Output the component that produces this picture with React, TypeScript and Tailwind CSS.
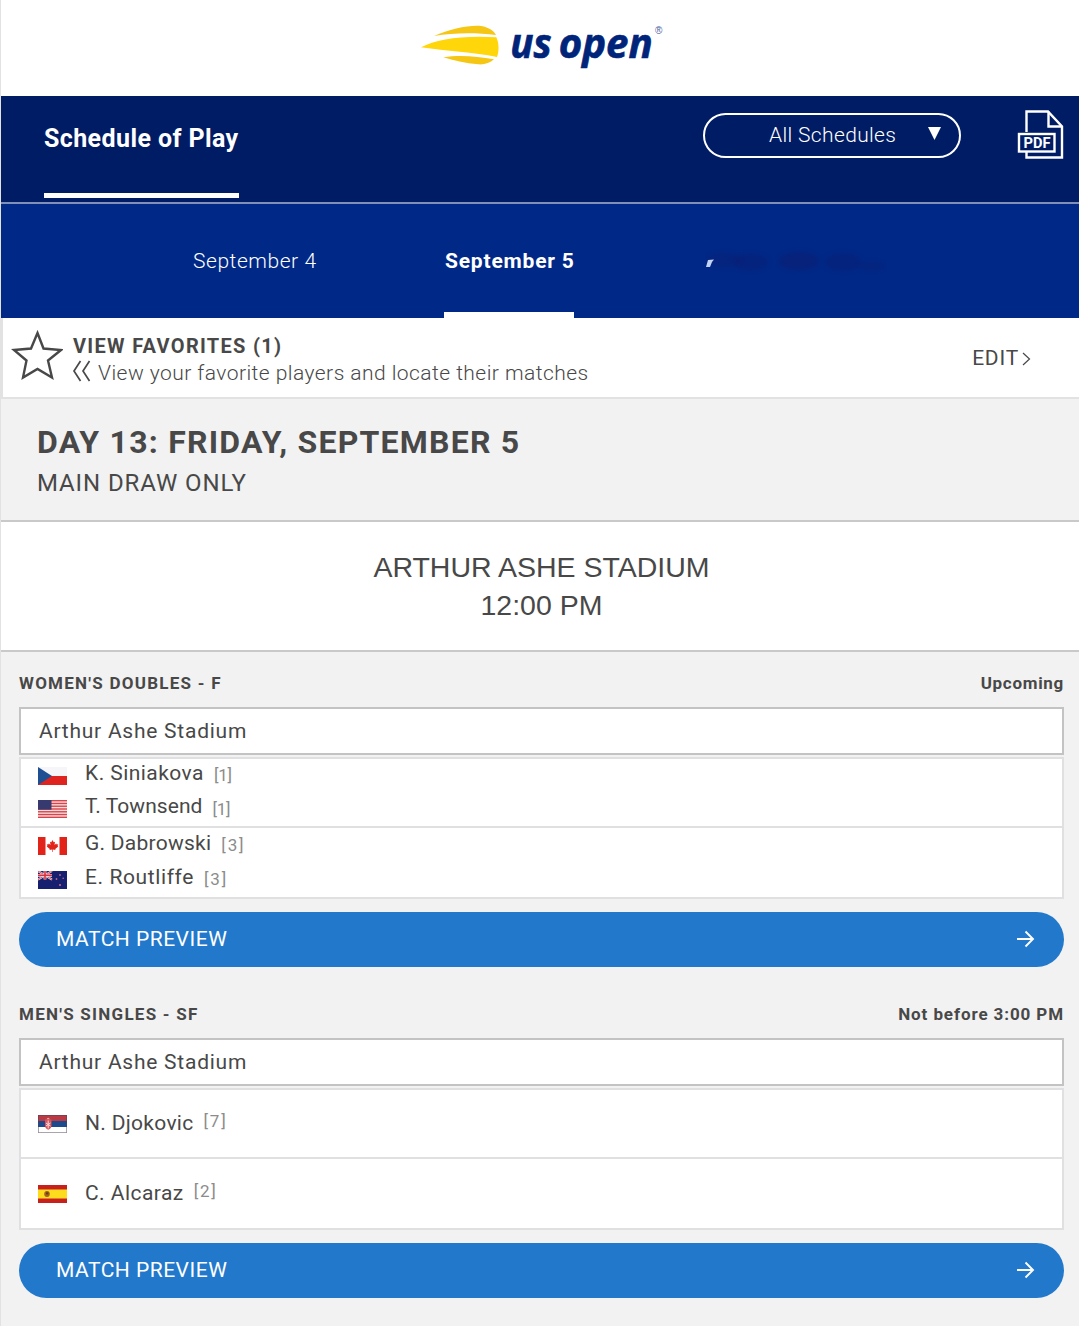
import type { ReactNode } from 'react';

type Country = 'CZE' | 'USA' | 'CAN' | 'NZL' | 'SRB' | 'ESP';

interface Player {
  name: string;
  seed: number;
  country: Country;
  tracking: string;
}

interface Match {
  event: string;
  status: string;
  court: string;
  teams: Player[][];
  statusTracking: string;
}

const matches: Match[] = [
  {
    event: "WOMEN'S DOUBLES - F",
    status: 'Upcoming',
    court: 'Arthur Ashe Stadium',
    statusTracking: 'tracking-[0.7px]',
    teams: [
      [
        { name: 'K. Siniakova', seed: 1, country: 'CZE', tracking: 'tracking-[0.45px]' },
        { name: 'T. Townsend', seed: 1, country: 'USA', tracking: 'tracking-[0.05px]' },
      ],
      [
        { name: 'G. Dabrowski', seed: 3, country: 'CAN', tracking: 'tracking-[0.25px]' },
        { name: 'E. Routliffe', seed: 3, country: 'NZL', tracking: 'tracking-[0.6px]' },
      ],
    ],
  },
  {
    event: "MEN'S SINGLES - SF",
    status: 'Not before 3:00 PM',
    court: 'Arthur Ashe Stadium',
    statusTracking: 'tracking-[0.9px]',
    teams: [
      [{ name: 'N. Djokovic', seed: 7, country: 'SRB', tracking: 'tracking-[0.3px]' }],
      [{ name: 'C. Alcaraz', seed: 2, country: 'ESP', tracking: 'tracking-[0.45px]' }],
    ],
  },
];

const flagArt: Record<Country, ReactNode> = {
  CZE: (
    <>
      <rect width="29" height="9" fill="#f6f6f8" />
      <rect y="9" width="29" height="9" fill="#df2420" />
      <path d="M0 0 L14 9 L0 18 Z" fill="#1f4f93" />
    </>
  ),
  USA: (
    <>
      <rect width="29" height="18" fill="#f7dcdc" />
      {[0, 1, 2, 3, 4, 5, 6].map((i) => (
        <rect key={i} y={i * 2.77} width="29" height="1.38" fill="#d9434a" />
      ))}
      <rect width="13.5" height="9.7" fill="#363a6e" />
    </>
  ),
  CAN: (
    <>
      <rect width="29" height="18" fill="#ffffff" />
      <rect width="7.5" height="18" fill="#e2231a" />
      <rect x="21.5" width="7.5" height="18" fill="#e2231a" />
      <path
        d="M14.5 3 L15.7 5.3 L17 4.7 L16.5 8 L18.2 6.6 L18.7 7.5 L20.2 7.3 L19.6 9.1 L20.3 9.6 L17.2 12 L17.5 13 L14.8 12.6 V15 H14.2 V12.6 L11.5 13 L11.8 12 L8.7 9.6 L9.4 9.1 L8.8 7.3 L10.3 7.5 L10.8 6.6 L12.5 8 L12 4.7 L13.3 5.3 Z"
        fill="#e2231a"
      />
    </>
  ),
  NZL: (
    <>
      <rect width="29" height="18" fill="#16206f" />
      <path d="M0 0 L14 8.6 M14 0 L0 8.6" stroke="#f3dfe6" strokeWidth="2" />
      <path d="M0 0 L14 8.6 M14 0 L0 8.6" stroke="#d8303c" strokeWidth="0.8" />
      <path d="M7 0 V8.6 M0 4.3 H14" stroke="#f3dfe6" strokeWidth="2.8" />
      <path d="M7 0 V8.6 M0 4.3 H14" stroke="#d8303c" strokeWidth="1.6" />
      <g fill="#c06a92">
        <circle cx="22" cy="4" r="0.9" />
        <circle cx="18.5" cy="8" r="0.9" />
        <circle cx="25.2" cy="7.2" r="0.8" />
        <circle cx="22" cy="14" r="1.1" />
      </g>
    </>
  ),
  SRB: (
    <>
      <rect width="29" height="6" fill="#b93a45" />
      <rect y="6" width="29" height="6" fill="#1c4a8c" />
      <rect y="12" width="29" height="6" fill="#ffffff" />
      <path d="M7 4.5 h6.5 v6 q0 3 -3.25 4.3 q-3.25 -1.3 -3.25 -4.3 Z" fill="#d8535a" />
      <path d="M10.2 5.5 v8 M8 8 l4.5 3 M12.5 8 l-4.5 3" stroke="#f3dede" strokeWidth="1" />
      <path d="M8.5 4.3 q1.7 -3 3.4 0 Z" fill="#e3b7a0" />
      <rect x="0.4" y="0.4" width="28.2" height="17.2" fill="none" stroke="#4a4458" strokeOpacity="0.6" strokeWidth="0.8" />
    </>
  ),
  ESP: (
    <>
      <rect width="29" height="18" fill="#c8201c" />
      <rect y="4.5" width="29" height="9" fill="#fddc1e" />
      <ellipse cx="9" cy="9" rx="2.8" ry="3" fill="#a5621f" />
      <path d="M8 7.4 h2.4 v2 h-2.4 Z" fill="#5e3a2a" />
    </>
  ),
};

function Flag({ country }: { country: Country }) {
  return (
    <svg viewBox="0 0 29 18" className="h-[18px] w-[29px] shrink-0" preserveAspectRatio="none">
      {flagArt[country]}
    </svg>
  );
}

function Logo() {
  return (
    <svg viewBox="0 0 795 225" className="h-[75px] w-[265px]" aria-label="US Open">
      <path d="M72 78 C120 57 175 45 213 48 C238 52 252 63 258 75 C195 67 130 68 72 78 Z" fill="#f5c714" />
      <path d="M33 112 C80 88 155 76 259 82 C267 98 268 125 261 141 C190 127 110 124 33 112 Z" fill="#ffd60a" />
      <path d="M100 142 C145 134 200 138 252 148 C240 159 225 164 205 163 C165 160 130 152 100 142 Z" fill="#f5c714" />
      <g fill="#00247a" stroke="#00247a" strokeWidth="2" fontFamily="'Open Sans', sans-serif" fontStyle="italic" fontWeight="700">
        <text x="301" y="144" fontSize="122" textLength="124" lengthAdjust="spacingAndGlyphs">us</text>
        <text x="446" y="144" fontSize="122" textLength="282" lengthAdjust="spacingAndGlyphs">open</text>
      </g>
      <text x="735" y="73" fontSize="30" fill="#4a62a0" fontFamily="'Liberation Sans', sans-serif">®</text>
    </svg>
  );
}

function PdfIcon() {
  return (
    <svg viewBox="0 0 48 50" className="h-[50px] w-[48px]" fill="none" stroke="#ffffff" strokeWidth="2.4">
      <path d="M9.5 23 V2.500 H31 L45 17.500 V48.500 H9.5 V43" />
      <path d="M31.5 2.500 V17.500 H45" />
      <rect x="2" y="25" width="35.500" height="17.500" />
      <text x="6.500" y="39" fontSize="14" fontWeight="700" fill="#ffffff" stroke="none" textLength="27" lengthAdjust="spacingAndGlyphs" fontFamily="Roboto, sans-serif">
        PDF
      </text>
    </svg>
  );
}

// Third day tab is hidden, only a faint smudge is left
function HiddenTab() {
  return (
    <svg viewBox="0 0 182 30" className="h-[30px] w-[182px]">
      <g fill="#0b1c70" style={{ filter: 'blur(2px)' }}>
        <ellipse cx="20" cy="14" rx="18" ry="7" opacity="0.35" />
        <ellipse cx="45" cy="16" rx="18" ry="8" opacity="0.4" />
        <ellipse cx="94" cy="15" rx="20" ry="9" opacity="0.5" />
        <ellipse cx="138" cy="16" rx="18" ry="9" opacity="0.4" />
        <ellipse cx="166" cy="20" rx="14" ry="4" opacity="0.35" />
      </g>
      <path d="M3 14 L9 13.500 L7 16 L5 21 L1 21 Z" fill="#c3d3f2" />
    </svg>
  );
}

function PlayerRow({ player, doubles }: { player: Player; doubles: boolean }) {
  return (
    <div className="flex h-[34px] items-center">
      <Flag country={player.country} />
      <span className={`ml-[18px] text-[21px] leading-[21px] text-[#484848] ${doubles ? 'pb-[5px]' : 'pb-px'} ${player.tracking}`}>
        {player.name}
      </span>
      <span
        className={`ml-[10px] text-[17px] leading-[17px] text-[#8c8c8c] ${player.seed === 1 ? 'tracking-[-0.3px]' : 'tracking-[1.8px]'} ${doubles ? '' : 'pb-[5px]'}`}
      >
        [{player.seed}]
      </span>
    </div>
  );
}

function MatchCard({ match }: { match: Match }) {
  return (
    <section className="flex flex-col">
      <div className="flex h-[24px] items-center justify-between text-[17px] leading-none font-bold text-[#484848]">
        <h3 className="tracking-[1.25px]">{match.event}</h3>
        <span className={match.statusTracking}>{match.status}</span>
      </div>
      <div className="mt-[12px] flex h-[48px] items-center border-2 border-[#c3c3c3] bg-white pt-[2px] pl-[18px] text-[21px] tracking-[0.75px] text-[#484848]">
        {match.court}
      </div>
      <div className="mt-[2px] h-[142px] border-2 border-[#e0e0e2] bg-white">
        {match.teams.map((team, i) => (
          <div
            key={i}
            className={`flex flex-col justify-center pl-[17px] ${i === 0 ? 'h-[69px] border-b-2 border-[#e0e0e2]' : 'h-[69px]'}`}
          >
            {team.map((player) => (
              <PlayerRow key={player.name} player={player} doubles={team.length > 1} />
            ))}
          </div>
        ))}
      </div>
      <button className="mt-[13px] flex h-[55px] items-center justify-between rounded-full bg-[#2278cb] pr-[29px] pl-[37px] text-[21px] tracking-[0.5px] text-white">
        MATCH PREVIEW
        <svg viewBox="0 0 20 20" className="mb-[2px] h-5 w-5" fill="none" stroke="currentColor" strokeWidth="1.900">
          <path d="M2 10 H18 M10.500 2.500 L18 10 L10.500 17.500" />
        </svg>
      </button>
    </section>
  );
}

export default function App() {
  return (
    <div className="h-[1326px] w-[1079px] overflow-hidden border-l border-[#e2e2e4] bg-[#f2f2f2] font-['Roboto',sans-serif] text-[#484848]">
      {/* Logo bar */}
      <header className="flex h-[96px] justify-center bg-white pt-[10px] pl-[4px]">
        <Logo />
      </header>

      {/* Title bar */}
      <div className="flex h-[108px] items-start border-b-2 border-[#8090b8] bg-[#001c64] pl-[43px]">
        <div className="h-[102px] w-[195px] border-b-[5px] border-white">
          <h1 className="pt-[28px] text-[25px] leading-[30px] font-bold tracking-[0.4px] whitespace-nowrap text-white">
            Schedule of Play
          </h1>
        </div>
        <button className="mt-[17px] ml-[464px] flex h-[45px] w-[258px] items-center justify-between rounded-full border-2 border-white pr-[18px] pl-[64px] text-[21px] font-light tracking-[0.35px] text-white">
          All Schedules
          <svg viewBox="0 0 13 13" className="mb-1 h-[13px] w-[13px]" fill="#ffffff">
            <path d="M0 0 H13 L6.500 13 Z" />
          </svg>
        </button>
        <div className="mt-[13px] ml-[56px]">
          <PdfIcon />
        </div>
      </div>

      {/* Day tabs */}
      <nav className="flex h-[114px] bg-[#002887] pl-[192px] text-[21px] text-white">
        <span className="w-[125px] pt-[41px] leading-[32px] font-light tracking-[0.55px] whitespace-nowrap">September 4</span>
        <span className="ml-[126px] w-[130px] border-b-[6px] border-white pt-[41px] pl-px leading-[32px] font-bold tracking-[0.8px] whitespace-nowrap">
          September 5
        </span>
        <span className="mt-[42px] ml-[131px]">
          <HiddenTab />
        </span>
      </nav>

      {/* Favorites */}
      <div className="flex h-[81px] items-start border-b-2 border-l-2 border-[#e2e2e2] bg-white">
        <svg viewBox="0 0 52 50" className="mt-[12px] ml-[8px] h-[50px] w-[52px]" fill="none" stroke="#484848" strokeWidth="2.400">
          <path d="M26.500 3 L32.500 18.500 L50 20 L37 30.500 L41 47.500 L26.500 39 L12 47.500 L15.500 30.500 L3 20 L20 18.500 Z" />
        </svg>
        <div className="ml-[10px] pt-[14px]">
          <h2 className="text-[20px] leading-[28px] font-bold tracking-[1.3px] whitespace-nowrap">VIEW FAVORITES (1)</h2>
          <p className="flex h-[26px] items-center text-[21px] leading-[26px] font-light tracking-[0.45px] whitespace-nowrap">
            <svg viewBox="0 0 19 22" className="mr-[7px] mb-[4px] -ml-px h-[22px] w-[19px]" fill="none" stroke="#484848" strokeWidth="1.700">
              <path d="M8.500 1 L2 11 L8.500 21 M17.500 1 L11 11 L17.500 21" />
            </svg>
            View your favorite players and locate their matches
          </p>
        </div>
        <div className="mt-[25px] mr-[48px] ml-auto flex items-center text-[21px] leading-[30px] tracking-[0.8px]">
          EDIT
          <svg viewBox="0 0 9 14" className="mt-[2px] ml-[3px] h-[14px] w-[9px]" fill="none" stroke="#484848" strokeWidth="1.200">
            <path d="M1 1 L7.500 7 L1 13" />
          </svg>
        </div>
      </div>

      {/* Day heading */}
      <div className="h-[123px] border-b-2 border-[#c9c9c9] pt-[24px] pl-[36px]">
        <h2 className="text-[32px] leading-[38px] font-bold tracking-[1.23px]">DAY 13: FRIDAY, SEPTEMBER 5</h2>
        <p className="mt-[8px] text-[24px] leading-[28px] tracking-[0.9px]">MAIN DRAW ONLY</p>
      </div>

      {/* Court heading */}
      <div className="h-[130px] border-b-2 border-[#c9c9c9] bg-white pt-[26px] pl-[3px] text-center font-['Liberation_Sans',sans-serif] text-[28.5px] leading-[38px]">
        <p>ARTHUR ASHE STADIUM</p>
        <p>12:00 PM</p>
      </div>

      {/* Matches */}
      <main className="flex flex-col gap-[35px] pt-[19px] pr-[15px] pl-[18px]">
        {matches.map((match) => (
          <MatchCard key={match.event} match={match} />
        ))}
      </main>
    </div>
  );
}
